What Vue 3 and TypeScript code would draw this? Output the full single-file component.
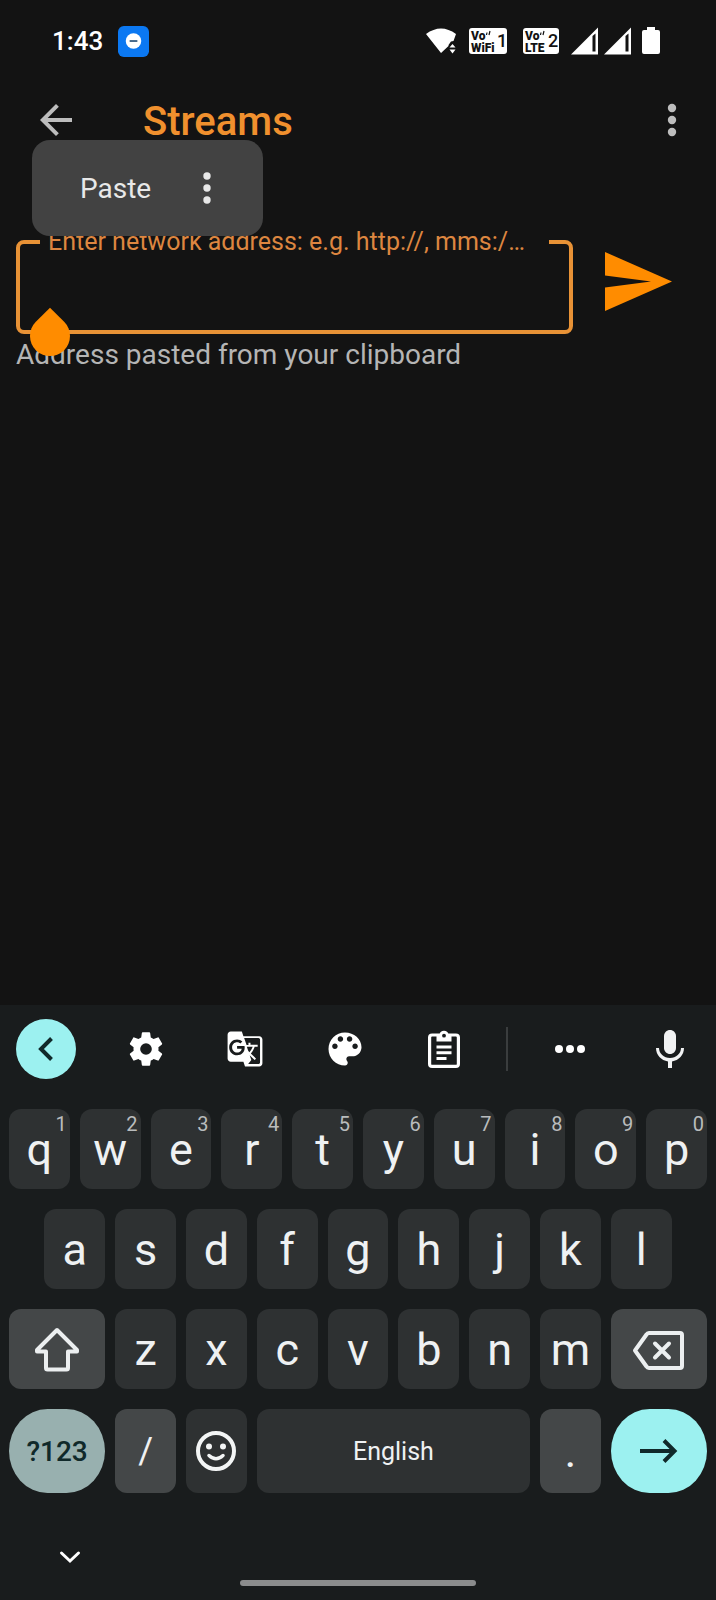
<script setup lang="ts">
import { ref } from 'vue'

interface LetterKey {
  letter: string
  hint?: string
}

const address = ref('')

const topRow: LetterKey[] = [...'qwertyuiop'].map((letter, i) => ({
  letter,
  hint: String((i + 1) % 10),
}))
const homeRow: string[] = [...'asdfghjkl']
const lowerRow: string[] = [...'zxcvbnm']

function type(char: string): void {
  address.value += char
}

function erase(): void {
  address.value = address.value.slice(0, -1)
}
</script>

<template>
  <div class="screen">
    <header class="status">
      <span class="clock">1:43</span>
      <svg class="badge-app" width="31" height="31" viewBox="0 0 32 32" aria-hidden="true">
        <rect width="32" height="32" rx="6" fill="#0b78f2" />
        <circle cx="16" cy="15.500" r="8" fill="#fff" />
        <path d="M12 15.500h8" stroke="#17436e" stroke-width="1.600" />
      </svg>
      <div class="signals" aria-hidden="true">
        <svg class="wifi" width="30" height="28" viewBox="0 0 30 28" fill="#fff">
          <path d="M0 7Q15-4 30 7L27.500 14 25 14.500 22.500 18V19L15 26Z" />
          <path d="M23.500 20.500L26.500 17l3 3.500zM23.500 22.500h6l-3 4z" />
        </svg>
        <svg class="vowifi" width="38" height="28" viewBox="0 0 38 28">
          <rect y="1" width="38" height="26" rx="3" fill="#fff" />
          <text x="2" y="13" class="net">Vo</text>
          <text x="2" y="25" class="net">WiFi</text>
          <text x="28" y="20" class="sim">1</text>
          <path d="M17.500 8l.5-2.500M20 8l1-4" stroke="#131313" stroke-width="1.200" />
        </svg>
        <svg class="volte" width="36" height="28" viewBox="0 0 36 28">
          <rect y="1" width="36" height="26" rx="3" fill="#fff" />
          <text x="2" y="13" class="net">Vo</text>
          <text x="2" y="25" class="net">LTE</text>
          <text x="25" y="20" class="sim">2</text>
          <path d="M17.500 8l.5-2.500M20 8l1-4" stroke="#131313" stroke-width="1.200" />
        </svg>
        <svg v-for="n in 2" :key="n" class="bars" width="27" height="28" viewBox="0 0 27 28">
          <path d="M0 27.500L27 .5v27z" fill="#fff" />
          <path d="M21.500 9l3-2.500V24.500h-3z" fill="#131313" />
        </svg>
        <svg class="battery" width="18" height="28" viewBox="0 0 18 28" fill="#fff">
          <path d="M5 0h8v3h3a2 2 0 0 1 2 2v20a2 2 0 0 1-2 2H2a2 2 0 0 1-2-2V5a2 2 0 0 1 2-2h3z" />
        </svg>
      </div>
    </header>

    <nav class="appbar">
      <button class="icon-btn" type="button" aria-label="Back">
        <svg width="48" height="48" viewBox="0 0 24 24" fill="#bdbdbd">
          <path d="M20 11H7.830l5.590-5.590L12 4l-8 8 8 8 1.410-1.410L7.830 13H20z" />
        </svg>
      </button>
      <h1>Streams</h1>
      <button class="icon-btn more" type="button" aria-label="More options">
        <svg width="48" height="48" viewBox="0 0 48 48" fill="#bdbdbd">
          <circle cx="24" cy="12" r="4.200" />
          <circle cx="24" cy="24" r="4.200" />
          <circle cx="24" cy="36" r="4.200" />
        </svg>
      </button>
      <div class="popup">
        <button type="button" class="paste">Paste</button>
        <button type="button" class="popup-more" aria-label="More actions">
          <svg width="32" height="40" viewBox="0 0 32 40" fill="#e8e8e8">
            <circle cx="16" cy="8" r="3.700" />
            <circle cx="16" cy="20" r="3.700" />
            <circle cx="16" cy="32" r="3.700" />
          </svg>
        </button>
      </div>
    </nav>

    <main>
      <form @submit.prevent>
        <div class="field">
          <fieldset>
            <legend><label for="address">Enter network address: e.g. http://, mms:/…</label></legend>
            <input id="address" v-model="address" type="text" aria-describedby="helper" />
          </fieldset>
          <span class="handle" aria-hidden="true"></span>
        </div>
        <button class="send" type="submit" aria-label="Play stream">
          <svg width="68" height="60" viewBox="0 0 68 60" fill="#ff8c00">
            <path d="M0 1L67 30.500 0 60V36.500L46 30.500 0 24.500z" />
          </svg>
        </button>
      </form>
      <p id="helper" class="helper">Address pasted from your clipboard</p>
    </main>

    <section class="keyboard" aria-label="Keyboard">
      <div class="tools">
        <div class="tools-main">
          <button class="tool back" type="button" aria-label="Close toolbar">
            <svg width="24" height="24" viewBox="0 0 24 24" fill="none" stroke="#10292a" stroke-width="4">
              <path d="M17.500 1.500L7 12l10.500 10.500" />
            </svg>
          </button>
          <button class="tool" type="button" aria-label="Settings">
            <svg width="40" height="40" viewBox="0 0 24 24" fill="#fff">
              <path d="M19.430 12.980c.04-.32.07-.64.07-.98s-.03-.66-.07-.98l2.110-1.650c.19-.15.24-.42.12-.64l-2-3.460c-.12-.22-.39-.3-.61-.22l-2.490 1c-.52-.4-1.080-.73-1.690-.98l-.38-2.650C14.460 2.180 14.250 2 14 2h-4c-.25 0-.46.18-.49.42l-.38 2.650c-.61.25-1.170.59-1.690.98l-2.490-1c-.23-.09-.49 0-.61.22l-2 3.460c-.13.22-.07.49.12.64l2.110 1.650c-.04.32-.07.65-.07.98s.03.66.07.98l-2.110 1.650c-.19.15-.24.42-.12.64l2 3.460c.12.22.39.3.61.22l2.490-1c.52.4 1.080.73 1.690.98l.38 2.650c.03.24.24.42.49.42h4c.25 0 .46-.18.49-.42l.38-2.650c.61-.25 1.170-.59 1.690-.98l2.490 1c.23.09.49 0 .61-.22l2-3.460c.12-.22.07-.49-.12-.64zM12 15.500a3.500 3.500 0 1 1 0-7 3.500 3.500 0 0 1 0 7z" />
            </svg>
          </button>
          <button class="tool" type="button" aria-label="Translate">
            <svg width="38" height="38" viewBox="0 0 24 24" fill="#fff">
              <path d="M21 4H11l-1-3H3c-1.100 0-2 .9-2 2v15c0 1.100.9 2 2 2h8l1 3h9c1.100 0 2-.9 2-2V6c0-1.100-.9-2-2-2zM7 16c-2.760 0-5-2.240-5-5s2.240-5 5-5c1.350 0 2.480.5 3.350 1.300L9.030 8.570c-.38-.36-1.040-.78-2.030-.78-1.740 0-3.150 1.440-3.150 3.210S5.260 14.210 7 14.210c2.010 0 2.840-1.440 2.920-2.410v-.01H7v-1.710h4.680c.07.31.12.61.12 1.020C11.800 13.970 9.890 16 7 16zm6.170-5.420h3.700c-.43 1.250-1.110 2.430-2.050 3.470-.31-.35-.6-.72-.86-1.100l-.79-2.370zm8.330 9.920c0 .55-.45 1-1 1H14l2-2.500-1.040-3.100 3.100 3.100.92-.92-3.300-3.250.02-.02c1.130-1.250 1.930-2.690 2.400-4.220H20v-1.300h-4.530V8h-1.290v1.440h-1.190L11.460 5h9.040c.55 0 1 .45 1 1v14.500z" />
            </svg>
          </button>
          <button class="tool" type="button" aria-label="Themes">
            <svg width="44" height="44" viewBox="0 0 24 24" fill="#fff">
              <path d="M12 3c-4.970 0-9 4.030-9 9s4.030 9 9 9c.83 0 1.500-.67 1.500-1.500 0-.39-.15-.74-.39-1.010-.23-.26-.38-.61-.38-.99 0-.83.67-1.500 1.500-1.500H16c2.760 0 5-2.240 5-5 0-4.420-4.030-8-9-8zm-5.500 9c-.83 0-1.500-.67-1.500-1.500S5.670 9 6.500 9 8 9.670 8 10.500 7.330 12 6.500 12zm3-4C8.670 8 8 7.330 8 6.500S8.670 5 9.500 5s1.500.67 1.500 1.500S10.330 8 9.500 8zm5 0c-.83 0-1.500-.67-1.500-1.500S13.670 5 14.500 5s1.500.67 1.500 1.500S15.330 8 14.500 8zm3 4c-.83 0-1.500-.67-1.500-1.500S16.670 9 17.500 9s1.500.67 1.500 1.500-.67 1.500-1.500 1.500z" />
            </svg>
          </button>
          <button class="tool" type="button" aria-label="Clipboard">
            <svg width="32" height="38" viewBox="0 0 32 38">
              <rect x="1.600" y="5" width="28.800" height="31.400" rx="2.500" fill="none" stroke="#fff" stroke-width="3.200" />
              <path d="M8.500 4.500h3a4.600 4.600 0 0 1 9 0h3v7h-15z" fill="#fff" />
              <circle cx="16" cy="5.700" r="1.900" fill="#191c1d" />
              <path d="M8.500 17h15M8.500 22.700h15M8.500 28.500h10" stroke="#fff" stroke-width="3" />
            </svg>
          </button>
        </div>
        <span class="divider"></span>
        <div class="tools-side">
          <button class="tool" type="button" aria-label="More tools">
            <svg width="32" height="12" viewBox="0 0 32 12" fill="#fff">
              <circle cx="5" cy="6" r="4" />
              <circle cx="16" cy="6" r="4" />
              <circle cx="27" cy="6" r="4" />
            </svg>
          </button>
          <button class="tool" type="button" aria-label="Voice input">
            <svg width="48" height="48" viewBox="0 0 24 24" fill="#f1f2f3">
              <path d="M12 14.500c1.660 0 3-1.340 3-3v-6c0-1.660-1.340-3-3-3s-3 1.340-3 3v6c0 1.660 1.340 3 3 3z" />
              <path d="M17.500 11.500c0 2.760-2.440 5-5.500 5s-5.500-2.240-5.500-5H5c0 3.530 2.610 6.230 6 6.720V21.500h2v-3.280c3.390-.49 6-3.190 6-6.720z" />
            </svg>
          </button>
        </div>
      </div>

      <div class="keys">
        <button v-for="key in topRow" :key="key.letter" class="key" type="button" @click="type(key.letter)">
          {{ key.letter }}<span class="hint">{{ key.hint }}</span>
        </button>

        <button v-for="letter in homeRow" :key="letter" class="key home" type="button" @click="type(letter)">
          {{ letter }}
        </button>

        <button class="key wide special" type="button" aria-label="Shift">
          <svg width="46" height="46" viewBox="0 0 46 46" fill="none" stroke="#eceff0" stroke-width="4" stroke-linejoin="round">
            <path d="M23 4L43 24v1.500H34V42a1.500 1.500 0 0 1-1.500 1.500h-19A1.500 1.500 0 0 1 12 42V25.500H3V24z" />
          </svg>
        </button>
        <button v-for="letter in lowerRow" :key="letter" class="key" type="button" @click="type(letter)">
          {{ letter }}
        </button>
        <button class="key wide special" type="button" aria-label="Delete" @click="erase">
          <svg class="delete" width="54" height="44" viewBox="0 0 54 44" fill="none" stroke="#eceff0" stroke-width="4" stroke-linejoin="round">
            <path d="M17 6h31a2 2 0 0 1 2 2v31a2 2 0 0 1-2 2H17a3 3 0 0 1-2.500-1.500L3 23.500 14.500 7.500A3 3 0 0 1 17 6z" />
            <path d="M23 16.500l14 14M37 16.500l-14 14" stroke-linecap="round" />
          </svg>
        </button>

        <button class="key wide tall symbols" type="button">?123</button>
        <button class="key tall special slash" type="button" @click="type('/')">/</button>
        <button class="key tall" type="button" aria-label="Emoji">
          <svg width="42" height="42" viewBox="0 0 42 42" fill="none" stroke="#f3f5f5" stroke-width="4">
            <circle cx="21" cy="21" r="18" />
            <path d="M14 25.500Q21 32 28 25.500" stroke-width="3.500" stroke-linecap="round" />
            <g fill="#f3f5f5" stroke="none">
              <circle cx="14" cy="16.500" r="3" />
              <circle cx="28" cy="16.500" r="3" />
            </g>
          </svg>
        </button>
        <button class="key tall space" type="button" @click="type(' ')">English</button>
        <button class="key tall special" type="button" @click="type('.')">.</button>
        <button class="key wide tall enter" type="button" aria-label="Go">
          <svg width="40" height="28" viewBox="0 0 40 28" fill="none" stroke="#10292a" stroke-width="4">
            <path d="M1 14h35M25 3.500L35.500 14 25 24.500" />
          </svg>
        </button>
      </div>

      <footer>
        <button class="hide" type="button" aria-label="Hide keyboard">
          <svg width="24" height="16" viewBox="0 0 24 16" fill="none" stroke="#fff" stroke-width="3" stroke-linecap="round">
            <path d="M3.500 4L12 12l8.500-8" />
          </svg>
        </button>
        <div class="home-bar"></div>
      </footer>
    </section>
  </div>
</template>

<style>
body {
  margin: 0;
  background: #131313;
}
</style>

<style scoped>
.screen {
  display: flex;
  flex-direction: column;
  min-height: 100vh;
  background: #131313;
  color: #fff;
  font-family: Roboto, 'Liberation Sans', sans-serif;
}

button {
  display: flex;
  align-items: center;
  justify-content: center;
  margin: 0;
  padding: 0;
  border: 0;
  background: none;
  color: inherit;
  font: inherit;
  cursor: pointer;
}

svg {
  display: block;
  flex: none;
}

.status {
  display: flex;
  align-items: center;
  height: 82px;
  padding: 0 56px 0 52px;
}

.clock {
  font-size: 26px;
  font-weight: 500;
}

.badge-app {
  margin-left: 15px;
}

.signals {
  display: flex;
  align-items: center;
  margin-left: auto;
}

.vowifi {
  margin-left: 13px;
}

.volte {
  margin-left: 16px;
}

.bars {
  margin-left: 6px;
}

.volte + .bars {
  margin-left: 12px;
}

.battery {
  margin-left: 11px;
}

.net {
  fill: #131313;
  font-size: 12px;
  font-weight: 900;
}

.sim {
  fill: #131313;
  font-size: 18px;
  font-weight: 500;
}

.appbar {
  position: relative;
  display: flex;
  align-items: center;
  height: 76px;
  padding: 0 20px 0 32px;
}

.icon-btn {
  width: 48px;
  height: 48px;
}

.more {
  margin-left: auto;
}

h1 {
  margin: 0 0 0 63px;
  padding-top: 4px;
  color: #f0902e;
  font-size: 40px;
  font-weight: 500;
  line-height: 48px;
}

.popup {
  position: absolute;
  top: 58px;
  left: 32px;
  z-index: 2;
  display: flex;
  align-items: center;
  height: 96px;
  padding: 0 40px 0 48px;
  border-radius: 18px;
  background: #424242;
}

.paste {
  color: #e8e8e8;
  font-size: 28px;
}

.popup-more {
  margin-left: 40px;
}

main {
  flex: 1;
  padding: 70px 16px 0;
}

form {
  display: flex;
  align-items: center;
  gap: 32px;
  padding-right: 27px;
}

.field {
  position: relative;
  flex: 1;
  min-width: 0;
}

fieldset {
  min-width: 0;
  height: 106px;
  box-sizing: border-box;
  margin: 0;
  padding: 0 20px;
  border: 4px solid #e89236;
  border-radius: 8px;
}

legend {
  box-sizing: border-box;
  width: 100%;
  padding: 0 8px;
  color: #dd8640;
  font-size: 25px;
  line-height: 28px;
  white-space: nowrap;
}

input {
  display: block;
  width: 100%;
  height: 72px;
  padding: 0 8px;
  box-sizing: border-box;
  border: 0;
  outline: 0;
  background: none;
  color: #e8e8e8;
  font: inherit;
  font-size: 32px;
}

.handle {
  position: absolute;
  bottom: -22px;
  left: 14px;
  z-index: 1;
  width: 40px;
  height: 40px;
  border-radius: 0 50% 50% 50%;
  background: #ff8c00;
  transform: rotate(45deg);
}

.helper {
  margin: 3px 0 0;
  color: #b5b5b5;
  font-size: 28px;
  line-height: 36px;
}

.keyboard {
  background: #191c1d;
}

.tools {
  display: flex;
  align-items: center;
  padding: 14px 16px 30px;
}

.tools-main {
  display: flex;
  flex: 1;
  justify-content: space-between;
}

.tools-side {
  display: flex;
  gap: 40px;
}

.tool {
  width: 60px;
  height: 60px;
}

.back {
  border-radius: 50%;
  background: #9cf1f0;
}

.divider {
  width: 2px;
  height: 44px;
  margin: 0 32px;
  background: #3a3d3e;
}

.keys {
  display: grid;
  grid-template-columns: repeat(20, minmax(0, 1fr));
  gap: 20px 10px;
  padding: 0 9px;
}

.key {
  position: relative;
  grid-column-end: span 2;
  height: 80px;
  border-radius: 12px;
  background: #2e3132;
  color: #eff1f2;
  font-size: 45px;
}

.home:nth-child(11) {
  grid-column-start: 2;
}

.wide {
  grid-column-end: span 3;
}

.home + .wide {
  grid-column-start: 1;
}

.tall {
  height: 84px;
}

.special {
  background: #444748;
}

.hint {
  position: absolute;
  top: 3px;
  right: 3px;
  color: #b9bcbd;
  font-size: 20px;
  line-height: 24px;
}

.symbols {
  border-radius: 40% / 50%;
  background: #98b0af;
  color: #10292a;
  font-size: 28px;
  font-weight: 500;
}

.slash {
  font-size: 36px;
}

.space {
  grid-column-end: span 8;
  font-size: 25px;
}

.enter {
  border-radius: 40% / 50%;
  background: #9cf1f0;
}

footer {
  display: flex;
  flex-direction: column;
  padding: 44px 0 14px;
}

.hide {
  width: 40px;
  height: 40px;
  margin-left: 50px;
}

.home-bar {
  align-self: center;
  width: 33%;
  height: 6px;
  margin-top: 3px;
  border-radius: 3px;
  background: #8b8c8d;
}
</style>
